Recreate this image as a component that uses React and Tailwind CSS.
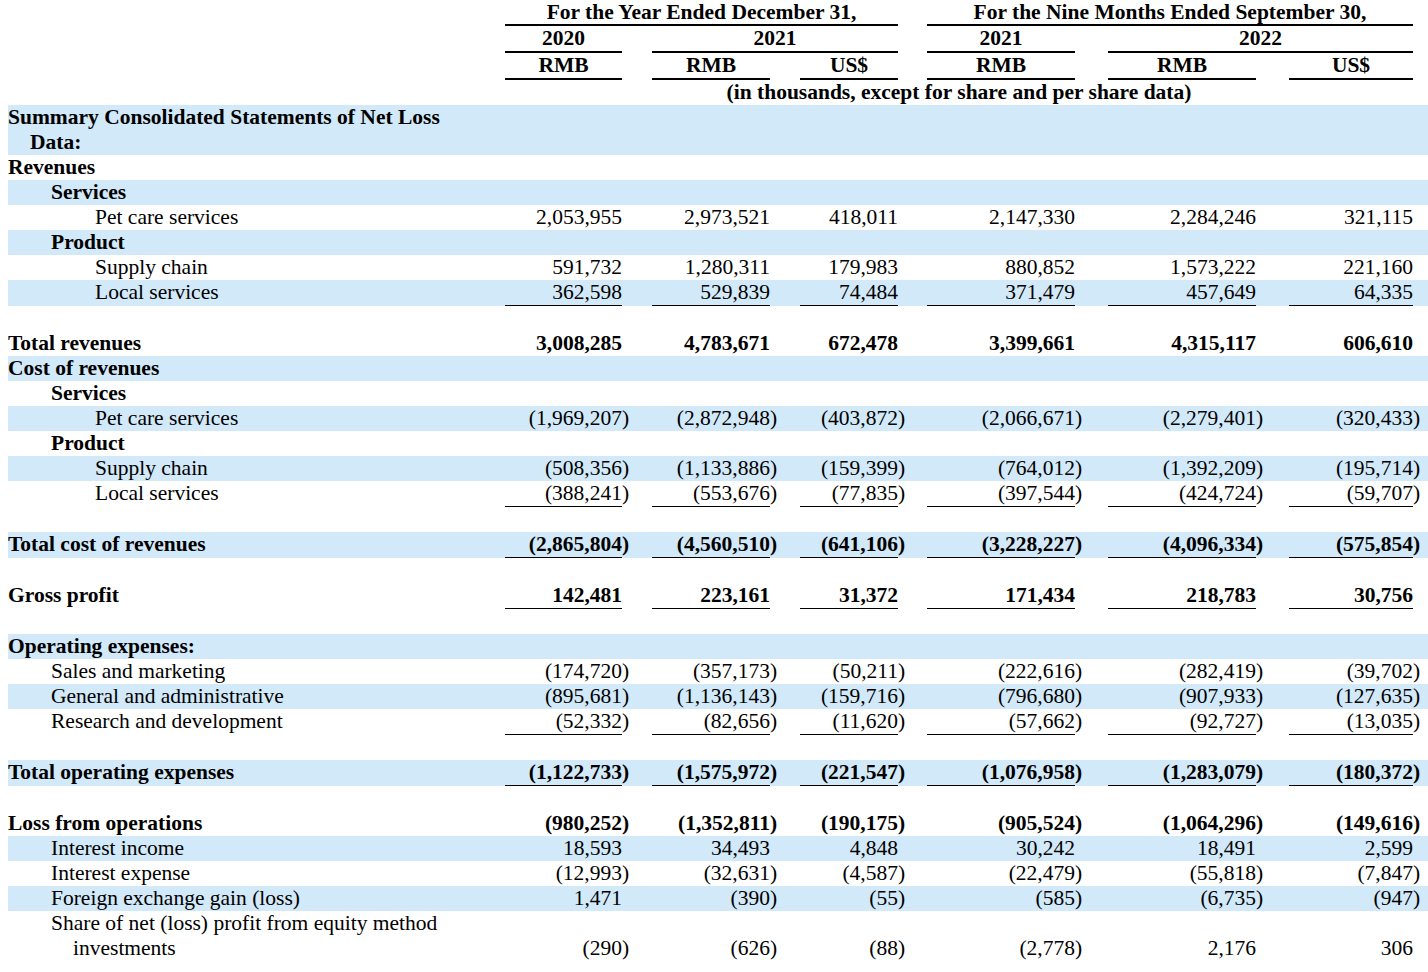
import React from 'react';

// Fixed column template: label | six number columns, each followed by a
// narrow cell that holds the closing parenthesis of negative figures.
const GRID =
  'grid grid-cols-[497px_117px_30px_118px_30px_98px_29px_148px_33px_148px_33px_124px_15px]';

const BLUE = 'bg-[#d2e9f9]';

const NUM_COLS = ['col-start-2', 'col-start-4', 'col-start-6', 'col-start-8', 'col-start-10', 'col-start-12'];
const PAREN_COLS = ['col-start-3', 'col-start-5', 'col-start-7', 'col-start-9', 'col-start-11', 'col-start-13'];

const INDENT = ['pl-0', 'pl-[43px]', 'pl-[87px]'];

const rows = [
  { kind: 'double', lines: ['Summary Consolidated Statements of Net Loss', 'Data:'], second: 'pl-[22px]', bold: true, blue: true },
  { label: 'Revenues', bold: true },
  { label: 'Services', bold: true, indent: 1, blue: true },
  { label: 'Pet care services', indent: 2, values: ['2,053,955', '2,973,521', '418,011', '2,147,330', '2,284,246', '321,115'] },
  { label: 'Product', bold: true, indent: 1, blue: true },
  { label: 'Supply chain', indent: 2, values: ['591,732', '1,280,311', '179,983', '880,852', '1,573,222', '221,160'] },
  { label: 'Local services', indent: 2, blue: true, line: true, values: ['362,598', '529,839', '74,484', '371,479', '457,649', '64,335'] },
  { kind: 'spacer' },
  { label: 'Total revenues', bold: true, boldValues: true, values: ['3,008,285', '4,783,671', '672,478', '3,399,661', '4,315,117', '606,610'] },
  { label: 'Cost of revenues', bold: true, blue: true },
  { label: 'Services', bold: true, indent: 1 },
  { label: 'Pet care services', indent: 2, blue: true, values: ['(1,969,207)', '(2,872,948)', '(403,872)', '(2,066,671)', '(2,279,401)', '(320,433)'] },
  { label: 'Product', bold: true, indent: 1 },
  { label: 'Supply chain', indent: 2, blue: true, values: ['(508,356)', '(1,133,886)', '(159,399)', '(764,012)', '(1,392,209)', '(195,714)'] },
  { label: 'Local services', indent: 2, line: true, values: ['(388,241)', '(553,676)', '(77,835)', '(397,544)', '(424,724)', '(59,707)'] },
  { kind: 'spacer' },
  { label: 'Total cost of revenues', bold: true, boldValues: true, blue: true, line: true, values: ['(2,865,804)', '(4,560,510)', '(641,106)', '(3,228,227)', '(4,096,334)', '(575,854)'] },
  { kind: 'spacer' },
  { label: 'Gross profit', bold: true, boldValues: true, line: true, values: ['142,481', '223,161', '31,372', '171,434', '218,783', '30,756'] },
  { kind: 'spacer' },
  { label: 'Operating expenses:', bold: true, blue: true },
  { label: 'Sales and marketing', indent: 1, values: ['(174,720)', '(357,173)', '(50,211)', '(222,616)', '(282,419)', '(39,702)'] },
  { label: 'General and administrative', indent: 1, blue: true, values: ['(895,681)', '(1,136,143)', '(159,716)', '(796,680)', '(907,933)', '(127,635)'] },
  { label: 'Research and development', indent: 1, line: true, values: ['(52,332)', '(82,656)', '(11,620)', '(57,662)', '(92,727)', '(13,035)'] },
  { kind: 'spacer' },
  { label: 'Total operating expenses', bold: true, boldValues: true, blue: true, line: true, values: ['(1,122,733)', '(1,575,972)', '(221,547)', '(1,076,958)', '(1,283,079)', '(180,372)'] },
  { kind: 'spacer' },
  { label: 'Loss from operations', bold: true, boldValues: true, values: ['(980,252)', '(1,352,811)', '(190,175)', '(905,524)', '(1,064,296)', '(149,616)'] },
  { label: 'Interest income', indent: 1, blue: true, values: ['18,593', '34,493', '4,848', '30,242', '18,491', '2,599'] },
  { label: 'Interest expense', indent: 1, values: ['(12,993)', '(32,631)', '(4,587)', '(22,479)', '(55,818)', '(7,847)'] },
  { label: 'Foreign exchange gain (loss)', indent: 1, blue: true, values: ['1,471', '(390)', '(55)', '(585)', '(6,735)', '(947)'] },
  {
    kind: 'double',
    lines: ['Share of net (loss) profit from equity method', 'investments'],
    first: 'pl-[43px]',
    second: 'pl-[65px]',
    values: ['(290)', '(626)', '(88)', '(2,778)', '2,176', '306'],
  },
];

function Values({ values, bold, line, bottom }) {
  return values.map((v, i) => {
    const neg = v.startsWith('(');
    const num = neg ? v.slice(0, -1) : v;
    return (
      <React.Fragment key={i}>
        <div
          className={`${NUM_COLS[i]} row-start-1 text-right leading-[23px] pt-[1px] pb-[1px] ${bottom ? 'self-end' : ''} ${
            line ? 'border-b border-black' : ''
          } ${bold ? 'font-bold' : ''}`}
        >
          {num}
        </div>
        <div
          className={`${PAREN_COLS[i]} row-start-1 leading-[23px] pt-[1px] pb-[1px] ${bottom ? 'self-end' : ''} ${
            bold ? 'font-bold' : ''
          }`}
        >
          {neg ? ')' : ''}
        </div>
      </React.Fragment>
    );
  });
}

function Row({ row }) {
  if (row.kind === 'spacer') return <div className="h-[25px]" />;

  if (row.kind === 'double') {
    return (
      <div className={`${GRID} ${row.blue ? BLUE : ''}`}>
        <div className={`col-start-1 row-start-1 leading-[24.5px] pb-[1px] ${row.bold ? 'font-bold' : ''}`}>
          <div className={row.first || ''}>{row.lines[0]}</div>
          <div className={row.second}>{row.lines[1]}</div>
        </div>
        {row.values && <Values values={row.values} bottom />}
      </div>
    );
  }

  return (
    <div className={`${GRID} ${row.blue ? BLUE : ''}`}>
      <div
        className={`col-start-1 row-start-1 leading-[23px] pt-[1px] pb-[1px] whitespace-nowrap ${INDENT[row.indent || 0]} ${
          row.bold ? 'font-bold' : ''
        }`}
      >
        {row.label}
      </div>
      {row.values ? (
        <Values values={row.values} bold={row.boldValues} line={row.line} />
      ) : (
        <div className="col-start-2 row-start-1 h-[25px]" />
      )}
    </div>
  );
}

function Header() {
  const cell = 'row-start-1 text-center font-bold leading-[23px] pt-[1px] border-b-2 border-black whitespace-nowrap';
  return (
    <div>
      <div className={GRID}>
        <div className={`col-start-2 col-span-5 ${cell}`}>For the Year Ended December 31,</div>
        <div className={`col-start-8 col-span-5 ${cell}`}>For the Nine Months Ended September 30,</div>
      </div>
      <div className={GRID}>
        <div className={`col-start-2 pb-[1px] ${cell}`}>2020</div>
        <div className={`col-start-4 col-span-3 pb-[1px] ${cell}`}>2021</div>
        <div className={`col-start-8 pb-[1px] ${cell}`}>2021</div>
        <div className={`col-start-10 col-span-3 pb-[1px] ${cell}`}>2022</div>
      </div>
      <div className={GRID}>
        <div className={`col-start-2 pb-[1px] ${cell}`}>RMB</div>
        <div className={`col-start-4 pb-[1px] ${cell}`}>RMB</div>
        <div className={`col-start-6 pb-[1px] ${cell}`}>US$</div>
        <div className={`col-start-8 pb-[1px] ${cell}`}>RMB</div>
        <div className={`col-start-10 pb-[1px] ${cell}`}>RMB</div>
        <div className={`col-start-12 pb-[1px] ${cell}`}>US$</div>
      </div>
      <div className={GRID}>
        <div className="col-start-2 col-span-11 row-start-1 text-center font-bold leading-[21px] pt-[2px] pb-[2px] whitespace-nowrap">
          (in thousands, except for share and per share data)
        </div>
      </div>
    </div>
  );
}

export default function App() {
  return (
    <div className="w-[1428px] min-h-[972px] bg-white pl-[8px] text-black text-[21.5px] font-['Liberation_Serif','Times_New_Roman',serif] overflow-hidden">
      <Header />
      {rows.map((r, i) => (
        <Row key={i} row={r} />
      ))}
    </div>
  );
}
